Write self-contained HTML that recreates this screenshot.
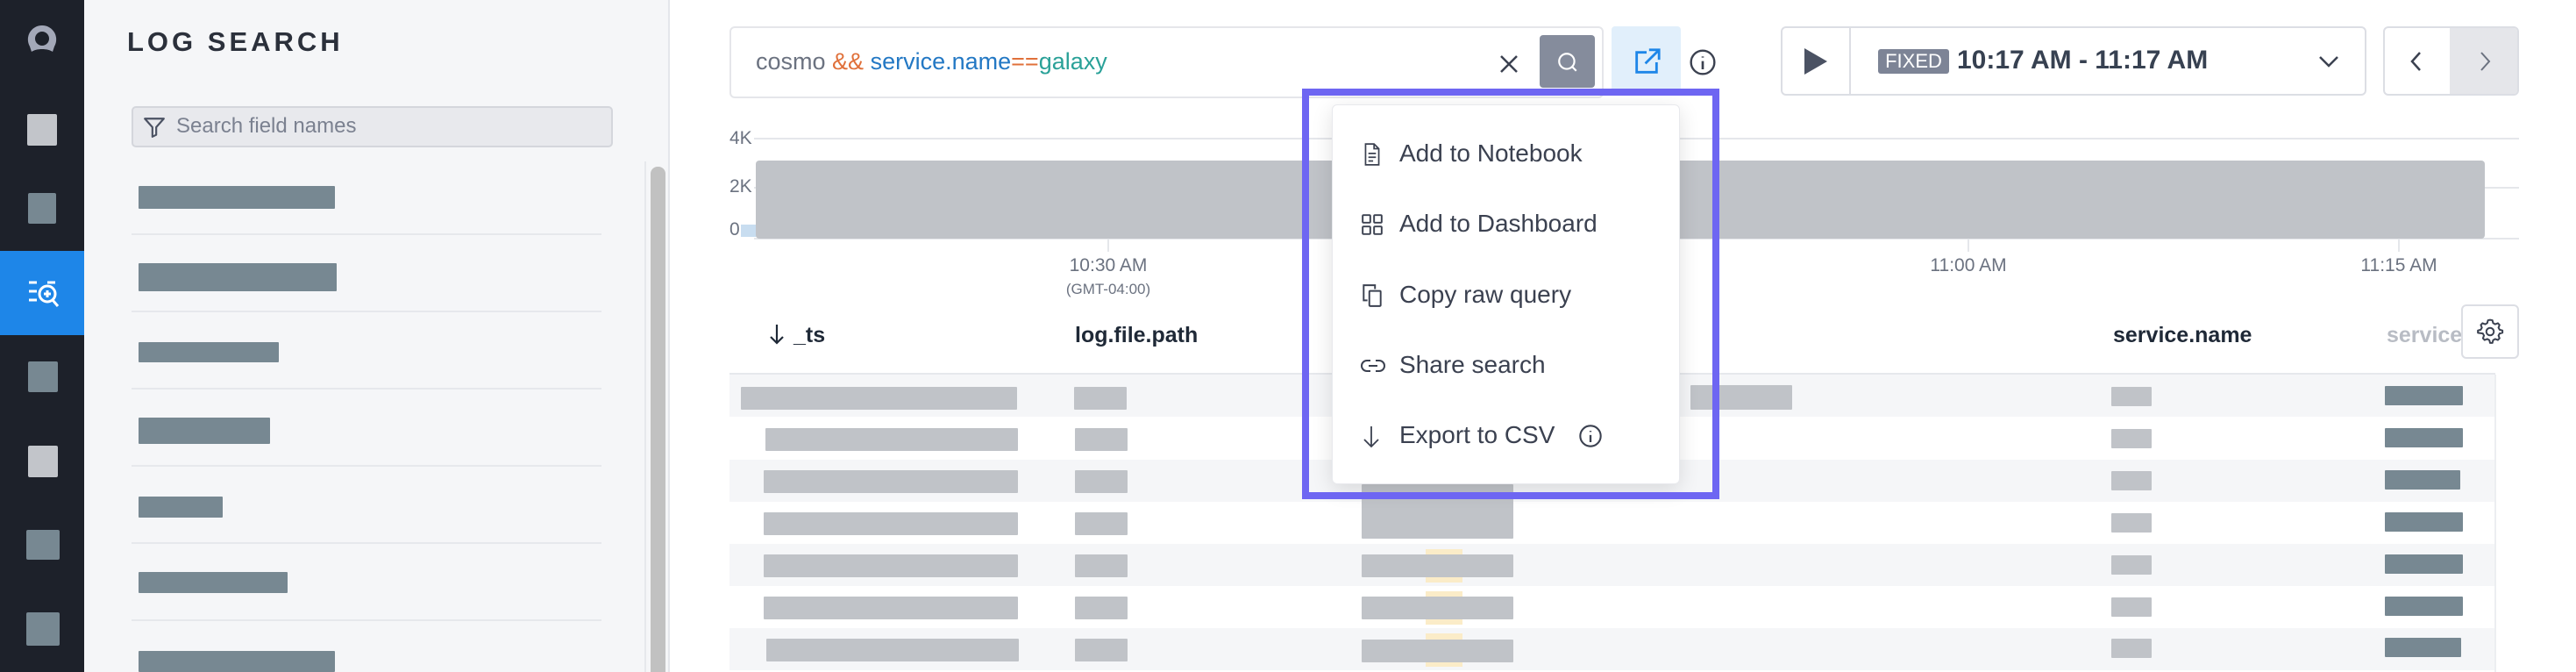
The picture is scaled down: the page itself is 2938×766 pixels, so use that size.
<!DOCTYPE html>
<html style="overflow:hidden"><head><meta charset="utf-8"><style>
*{box-sizing:border-box;margin:0;padding:0}
html,body{width:2938px;height:766px;overflow:hidden}
body{background:#fff;font-family:"Liberation Sans",sans-serif;position:relative}
.a{position:absolute}
.nav{left:0;top:0;width:96px;height:766px;background:#1d212a}
.panel{left:96px;top:0;width:668px;height:766px;background:#f5f6f8;border-right:2px solid #e4e6eb}
.sep{left:150px;width:536px;height:2px;background:#e6e8ec}
.fb{left:158px;background:#778892;border-radius:1px}
.gb{background:#c0c3c8;border-radius:1px}
.db{background:#778892;border-radius:1px}
.row{left:832px;width:2013px;height:48px}
.mi{left:1596px;font-size:28px;color:#3b4150}
.ic{left:1552px}
</style></head><body>
<div class="a nav"></div>
<svg class="a" style="left:30px;top:27px" width="36" height="36" viewBox="0 0 36 36"><path d="M18 2a16 16 0 0 0-14 24l2 6c3-2 7-3 12-3s9 1 12 3l2-6A16 16 0 0 0 18 2zm0 7a8 8 0 1 1 0 16a8 8 0 1 1 0-16z" fill="#a3a8b8" fill-rule="evenodd"/></svg>
<div class="a" style="left:31px;top:130px;width:34px;height:36px;background:#c2c5ca;border-radius:2px"></div>
<div class="a" style="left:32px;top:220px;width:32px;height:35px;background:#778892;border-radius:2px"></div>
<div class="a" style="left:0;top:286px;width:96px;height:96px;background:#1e86e8"></div>
<svg class="a" style="left:32px;top:320px" width="36" height="32" viewBox="0 0 36 32"><g stroke="#fff" stroke-width="3" fill="none"><path d="M1 2h9M22 2h9M1 12h9M1 22h9"/><circle cx="22" cy="15" r="9"/><path d="M28 22l6 7M22 11v8M18 15h8"/></g></svg>
<div class="a" style="left:32px;top:412px;width:34px;height:35px;background:#778892;border-radius:2px"></div>
<div class="a" style="left:32px;top:508px;width:34px;height:36px;background:#c2c5ca;border-radius:2px"></div>
<div class="a" style="left:30px;top:604px;width:38px;height:34px;background:#778892;border-radius:2px"></div>
<div class="a" style="left:30px;top:698px;width:38px;height:38px;background:#778892;border-radius:2px"></div>

<div class="a panel"></div>
<div class="a" style="left:145px;top:30px;font-size:31px;font-weight:bold;letter-spacing:4px;color:#2b303b">LOG SEARCH</div>
<div class="a" style="left:150px;top:121px;width:549px;height:47px;background:#e8e9ed;border:2px solid #d4d6dc;border-radius:5px"></div>
<svg class="a" style="left:163px;top:132px" width="26" height="26" viewBox="0 0 24 24"><path d="M2 3h20l-8 9v8l-4 2v-10z" fill="none" stroke="#4b5263" stroke-width="2" stroke-linejoin="round"/></svg>
<div class="a" style="left:201px;top:130px;font-size:24px;color:#7b8190">Search field names</div>
<div class="a" style="left:735px;top:184px;width:2px;height:582px;background:#e6e8ec"></div>
<div class="a" style="left:742px;top:190px;width:17px;height:576px;background:#c1c1c1;border-radius:8px 8px 0 0"></div>
<div class="a fb" style="top:212px;width:224px;height:26px"></div>
<div class="a sep" style="top:266px"></div>
<div class="a fb" style="top:300px;width:226px;height:32px"></div>
<div class="a sep" style="top:354px"></div>
<div class="a fb" style="top:390px;width:160px;height:23px"></div>
<div class="a sep" style="top:442px"></div>
<div class="a fb" style="top:476px;width:150px;height:30px"></div>
<div class="a sep" style="top:530px"></div>
<div class="a fb" style="top:566px;width:96px;height:24px"></div>
<div class="a sep" style="top:618px"></div>
<div class="a fb" style="top:652px;width:170px;height:24px"></div>
<div class="a sep" style="top:706px"></div>
<div class="a fb" style="top:742px;width:224px;height:24px"></div>

<!-- search -->
<div class="a" style="left:832px;top:30px;width:997px;height:82px;border:2px solid #e5e6ea;border-radius:6px"></div>
<div class="a" style="left:862px;top:55px;font-size:27px;color:#6b7280;white-space:pre">cosmo <span style="color:#e0703a">&amp;&amp;</span> <span style="color:#2378c4">service.name</span><span style="color:#e0703a">==</span><span style="color:#2aa198">galaxy</span></div>
<svg class="a" style="left:1709px;top:61px" width="24" height="24" viewBox="0 0 24 24"><path d="M3 3l18 18M21 3L3 21" stroke="#3b4150" stroke-width="2.5"/></svg>
<div class="a" style="left:1756px;top:40px;width:63px;height:60px;background:#858c9c;border-radius:4px"></div>
<svg class="a" style="left:1775px;top:58px" width="26" height="26" viewBox="0 0 24 24"><circle cx="11" cy="11" r="8" fill="none" stroke="#fff" stroke-width="2"/><path d="M17 17l4 4" stroke="#fff" stroke-width="2"/></svg>
<div class="a" style="left:1838px;top:30px;width:79px;height:78px;background:#e1effb;border-radius:4px"></div>
<svg class="a" style="left:1861px;top:54px" width="34" height="34" viewBox="0 0 24 24"><path d="M12 4H4v16h16v-8M14 2h8v8M22 2L11 13" fill="none" stroke="#1e86e8" stroke-width="2"/></svg>
<svg class="a" style="left:1926px;top:55px" width="32" height="32" viewBox="0 0 24 24"><circle cx="12" cy="12" r="10" fill="none" stroke="#3b4150" stroke-width="1.8"/><path d="M12 11v7M12 7v1" stroke="#3b4150" stroke-width="2"/></svg>

<!-- time picker -->
<div class="a" style="left:2031px;top:30px;width:668px;height:79px;border:2px solid #dcdee4;border-radius:6px"></div>
<div class="a" style="left:2109px;top:31px;width:2px;height:77px;background:#dcdee4"></div>
<svg class="a" style="left:2058px;top:55px" width="26" height="30" viewBox="0 0 26 30"><path d="M0 0L26 15L0 30z" fill="#4b5263"/></svg>
<div class="a" style="left:2142px;top:56px;width:81px;height:28px;background:#7d8496;border-radius:3px;color:#fff;font-size:22px;line-height:28px;text-align:center">FIXED</div>
<div class="a" style="left:2232px;top:52px;font-size:30px;font-weight:bold;color:#374151">10:17 AM - 11:17 AM</div>
<svg class="a" style="left:2644px;top:62px" width="24" height="16" viewBox="0 0 24 16"><path d="M2 3l10 10L22 3" fill="none" stroke="#3b4150" stroke-width="2.5"/></svg>
<div class="a" style="left:2718px;top:30px;width:155px;height:79px;border:2px solid #dcdee4;border-radius:6px;overflow:hidden"><div class="a" style="left:74px;top:0;width:81px;height:79px;background:#e5e6ea"></div></div>
<svg class="a" style="left:2746px;top:57px" width="20" height="26" viewBox="0 0 20 26"><path d="M14 3L5 13l9 10" fill="none" stroke="#3b4150" stroke-width="2.5"/></svg>
<svg class="a" style="left:2824px;top:57px" width="20" height="26" viewBox="0 0 20 26"><path d="M6 3l9 10-9 10" fill="none" stroke="#6b7280" stroke-width="2"/></svg>

<!-- chart -->
<div class="a" style="left:860px;top:157px;width:2013px;height:2px;background:#e5e7eb"></div>
<div class="a" style="left:860px;top:213px;width:2013px;height:2px;background:#e5e7eb"></div>
<div class="a" style="left:860px;top:271px;width:2013px;height:2px;background:#e5e7eb"></div>
<div class="a" style="left:832px;top:146px;font-size:21px;color:#6b7280">4K</div>
<div class="a" style="left:832px;top:201px;font-size:21px;color:#6b7280">2K</div>
<div class="a" style="left:832px;top:250px;font-size:21px;color:#6b7280">0</div>
<div class="a" style="left:845px;top:256px;width:18px;height:14px;background:#c8ddf0"></div>
<div class="a" style="left:862px;top:183px;width:1972px;height:89px;background:#c0c3c8;border-radius:4px"></div>
<div class="a" style="left:1263px;top:273px;width:2px;height:14px;background:#e5e7eb"></div>
<div class="a" style="left:2244px;top:273px;width:2px;height:14px;background:#e5e7eb"></div>
<div class="a" style="left:2735px;top:273px;width:2px;height:14px;background:#e5e7eb"></div>
<div class="a" style="left:1164px;top:291px;width:200px;text-align:center;font-size:21px;color:#6b7280">10:30 AM</div>
<div class="a" style="left:1164px;top:320px;width:200px;text-align:center;font-size:17px;color:#6b7280">(GMT-04:00)</div>
<div class="a" style="left:2145px;top:291px;width:200px;text-align:center;font-size:21px;color:#6b7280">11:00 AM</div>
<div class="a" style="left:2636px;top:291px;width:200px;text-align:center;font-size:21px;color:#6b7280">11:15 AM</div>

<!-- table header -->
<svg class="a" style="left:876px;top:368px" width="20" height="26" viewBox="0 0 20 26"><path d="M10 2v21M3 16l7 7 7-7" fill="none" stroke="#1f2937" stroke-width="2.2"/></svg>
<div class="a" style="left:905px;top:368px;font-size:25px;font-weight:bold;color:#1f2937">_ts</div>
<div class="a" style="left:1226px;top:368px;font-size:25px;font-weight:bold;color:#1f2937">log.file.path</div>
<div class="a" style="left:2410px;top:368px;font-size:25px;font-weight:bold;color:#1f2937">service.name</div>
<div class="a" style="left:2722px;top:368px;width:85px;overflow:hidden;font-size:25px;font-weight:bold;color:#b8bcc4;white-space:nowrap">service</div>
<div class="a" style="left:2807px;top:347px;width:66px;height:62px;border:2px solid #dcdee4;border-radius:6px;background:#fff"></div>
<svg class="a" style="left:2824px;top:362px" width="32" height="32" viewBox="0 0 24 24"><path d="M12 2l2 .3.6 2.4 1.8 1 2.3-.9 1.4 1.5-.9 2.3 1 1.8 2.4.6v2l-2.4.6-1 1.8.9 2.3-1.4 1.5-2.3-.9-1.8 1-.6 2.4h-2l-.6-2.4-1.8-1-2.3.9-1.4-1.5.9-2.3-1-1.8L1.6 13v-2l2.4-.6 1-1.8-.9-2.3 1.4-1.5 2.3.9 1.8-1L10.2 2.3z" fill="none" stroke="#3b4150" stroke-width="1.5" stroke-linejoin="round"/><circle cx="12" cy="12" r="3.2" fill="none" stroke="#3b4150" stroke-width="1.5"/></svg>
<div class="a" style="left:832px;top:425px;width:2014px;height:2px;background:#e6e8ec"></div>
<div class="a" style="left:2845px;top:427px;width:2px;height:339px;background:#eceef1"></div>

<!-- rows -->
<div class="a row" style="top:427px;background:#f5f6f8"></div>
<div class="a row" style="top:524px;background:#f5f6f8"></div>
<div class="a row" style="top:620px;background:#f5f6f8"></div>
<div class="a row" style="top:716px;background:#f5f6f8"></div>

<div class="a gb" style="left:845px;top:441px;width:315px;height:26px"></div>
<div class="a gb" style="left:873px;top:488px;width:288px;height:26px"></div>
<div class="a gb" style="left:871px;top:536px;width:290px;height:26px"></div>
<div class="a gb" style="left:871px;top:584px;width:290px;height:26px"></div>
<div class="a gb" style="left:871px;top:632px;width:290px;height:26px"></div>
<div class="a gb" style="left:871px;top:680px;width:290px;height:26px"></div>
<div class="a gb" style="left:874px;top:728px;width:288px;height:26px"></div>

<div class="a gb" style="left:1225px;top:441px;width:60px;height:26px"></div>
<div class="a gb" style="left:1226px;top:488px;width:60px;height:26px"></div>
<div class="a gb" style="left:1226px;top:536px;width:60px;height:26px"></div>
<div class="a gb" style="left:1226px;top:584px;width:60px;height:26px"></div>
<div class="a gb" style="left:1226px;top:632px;width:60px;height:26px"></div>
<div class="a gb" style="left:1226px;top:680px;width:60px;height:26px"></div>
<div class="a gb" style="left:1226px;top:728px;width:60px;height:26px"></div>

<div class="a" style="left:1626px;top:626px;width:42px;height:38px;background:#fbecc8"></div>
<div class="a" style="left:1626px;top:674px;width:42px;height:38px;background:#fbecc8"></div>
<div class="a" style="left:1626px;top:722px;width:42px;height:38px;background:#fbecc8"></div>
<div class="a gb" style="left:1553px;top:552px;width:173px;height:62px"></div>
<div class="a gb" style="left:1553px;top:632px;width:173px;height:26px"></div>
<div class="a gb" style="left:1553px;top:680px;width:173px;height:26px"></div>
<div class="a gb" style="left:1553px;top:729px;width:173px;height:26px"></div>
<div class="a gb" style="left:1928px;top:439px;width:116px;height:28px"></div>

<div class="a gb" style="left:2408px;top:441px;width:46px;height:22px"></div>
<div class="a gb" style="left:2408px;top:489px;width:46px;height:22px"></div>
<div class="a gb" style="left:2408px;top:537px;width:46px;height:22px"></div>
<div class="a gb" style="left:2408px;top:585px;width:46px;height:22px"></div>
<div class="a gb" style="left:2408px;top:633px;width:46px;height:22px"></div>
<div class="a gb" style="left:2408px;top:681px;width:46px;height:22px"></div>
<div class="a gb" style="left:2408px;top:728px;width:46px;height:22px"></div>

<div class="a db" style="left:2720px;top:440px;width:89px;height:22px"></div>
<div class="a db" style="left:2720px;top:488px;width:89px;height:22px"></div>
<div class="a db" style="left:2720px;top:536px;width:86px;height:22px"></div>
<div class="a db" style="left:2720px;top:584px;width:89px;height:22px"></div>
<div class="a db" style="left:2720px;top:632px;width:89px;height:22px"></div>
<div class="a db" style="left:2720px;top:680px;width:89px;height:22px"></div>
<div class="a db" style="left:2720px;top:727px;width:87px;height:22px"></div>

<!-- menu -->
<div class="a" style="left:1519px;top:119px;width:397px;height:433px;background:#fff;border:1px solid #e8e9ed;border-radius:6px;box-shadow:0 6px 24px rgba(0,0,0,.12)"></div>
<svg class="a ic" style="top:162px" width="26" height="28" viewBox="0 0 24 26"><path d="M5 2h9l5 5v17H5z M14 2v5h5 M8 12h8M8 16h8M8 20h5" fill="none" stroke="#3b4150" stroke-width="1.6"/></svg>
<div class="a mi" style="top:159px">Add to Notebook</div>
<svg class="a ic" style="top:243px" width="26" height="26" viewBox="0 0 24 24"><g fill="none" stroke="#3b4150" stroke-width="1.8"><rect x="2" y="2" width="8" height="8" rx="1"/><rect x="14" y="2" width="8" height="8" rx="1"/><rect x="2" y="14" width="8" height="8" rx="1"/><rect x="14" y="14" width="8" height="8" rx="1"/></g></svg>
<div class="a mi" style="top:239px">Add to Dashboard</div>
<svg class="a ic" style="top:323px" width="26" height="28" viewBox="0 0 24 26"><g fill="none" stroke="#3b4150" stroke-width="1.8"><path d="M7 18H3V2h12v4"/><rect x="9" y="8" width="12" height="16" rx="1"/></g></svg>
<div class="a mi" style="top:320px">Copy raw query</div>
<svg class="a ic" style="top:405px" width="28" height="24" viewBox="0 0 28 24"><path d="M11 6H7a6 6 0 0 0 0 12h4M17 6h4a6 6 0 0 1 0 12h-4M9 12h10" fill="none" stroke="#3b4150" stroke-width="2"/></svg>
<div class="a mi" style="top:400px">Share search</div>
<svg class="a ic" style="top:484px" width="24" height="28" viewBox="0 0 24 28"><path d="M12 2v23M4 17l8 8 8-8" fill="none" stroke="#3b4150" stroke-width="1.8"/></svg>
<div class="a mi" style="top:480px">Export to CSV</div>
<svg class="a" style="left:1800px;top:483px" width="28" height="28" viewBox="0 0 24 24"><circle cx="12" cy="12" r="10" fill="none" stroke="#3b4150" stroke-width="1.8"/><path d="M12 11v7M12 7v1" stroke="#3b4150" stroke-width="2"/></svg>

<div class="a" style="left:1485px;top:101px;width:476px;height:468px;border:8px solid #6e66f2"></div>
</body></html>
